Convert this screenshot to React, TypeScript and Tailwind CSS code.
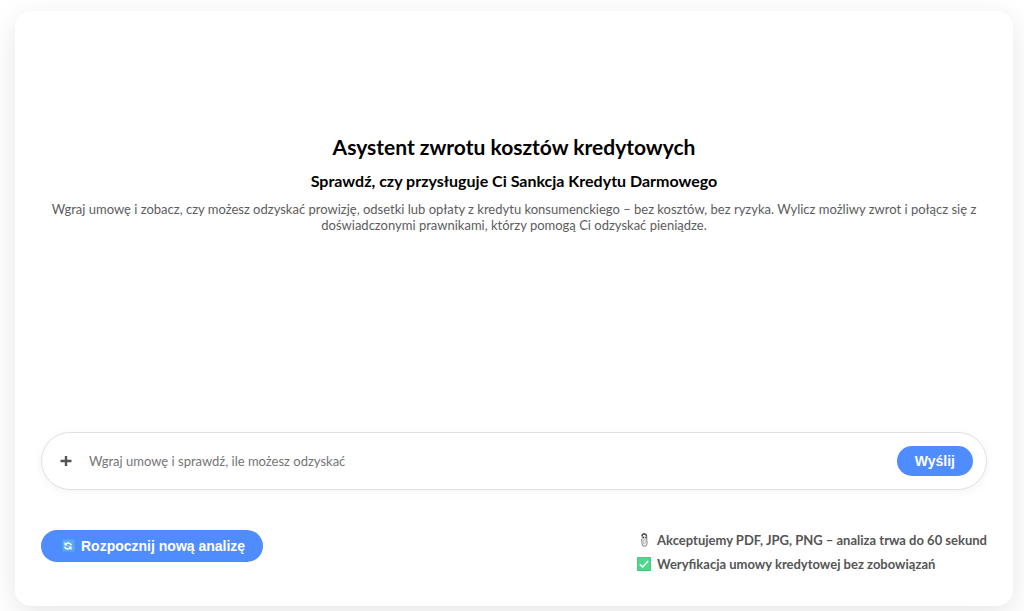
function RefreshIcon() {
  return (
    <svg viewBox="0 0 14 14" className="h-3.5 w-3.5 shrink-0" aria-hidden="true">
      <rect x="0.5" y="0.5" width="13" height="13" rx="0.6" fill="#5aaaf6" />
      <path d="M0.5 13.1h13M0.9 0.5v13" stroke="#3b8be6" strokeWidth="0.8" />
      <path d="M10.3 6.2C9.8 4.2 6.8 3.3 4.8 5M3.7 7.8C4.2 9.8 7.2 10.7 9.2 9" fill="none" stroke="#fff" strokeWidth="1.5" />
      <path d="M3.4 3v3.4h3.4zM10.6 11V7.6H7.2z" fill="#fff" />
    </svg>
  );
}

function PaperclipIcon() {
  return (
    <svg viewBox="0 0 14 14" className="h-3.5 w-3.5 shrink-0" aria-hidden="true">
      <path
        d="M5 3.6C5 1.6 5.7.8 7.1.8s2.4.9 2.5 2.6l.4 6.2c.1 2.3-.8 3.6-2.4 3.6S5.2 12.2 5 10.2L4.6 5.8"
        fill="none"
        stroke="#999"
        strokeWidth="1.2"
      />
      <path
        d="M7.9 3.6l.3 5.6c.1 1.3-.2 1.9-.8 1.9s-.9-.5-1-1.5L6 5.6c-.1-1.2.3-1.9 1-1.9"
        fill="none"
        stroke="#b5b5b5"
        strokeWidth="1"
      />
      <path d="M5 3.5C5 1.7 5.8.8 7.1.8s2.3.8 2.5 2.4" fill="none" stroke="#444" strokeWidth="1.2" />
      <path d="M5.5 4.5h1.5M8.3 4.5h1.2" stroke="#333" strokeWidth="1.5" />
    </svg>
  );
}

function CheckIcon() {
  return (
    <svg viewBox="0 0 14 14" className="h-3.5 w-3.5 shrink-0" aria-hidden="true">
      <rect width="14" height="14" rx="1" fill="#3cc47c" />
      <rect x="0.6" y="0.6" width="12.8" height="12.4" rx="0.8" fill="#52d68d" />
      <path d="M2.8 7.2l2.8 2.7 5.6-5.8" fill="none" stroke="#fff" strokeWidth="1.4" />
    </svg>
  );
}

export default function App() {
  return (
    <div className="flex min-h-screen flex-col bg-white pt-[11px] pr-[11px] pb-[5px] pl-[15px] font-['Lato','Noto_Sans',sans-serif]">
      <main className="flex flex-1 flex-col rounded-2xl bg-white px-[26px] pb-[30px] shadow-[0_8px_30px_rgba(0,0,0,0.1)]">
        <section className="flex flex-1 flex-col items-center justify-center pb-[77px] text-center">
          <h1 className="text-[21px] leading-7 font-bold text-black">Asystent zwrotu kosztów kredytowych</h1>
          <h2 className="mt-2 text-base leading-6 font-bold text-black">
            Sprawdź, czy przysługuje Ci Sankcja Kredytu Darmowego
          </h2>
          <p className="mt-2 px-1 text-[13px] leading-4 text-[#5c5c5c]">
            Wgraj umowę i zobacz, czy możesz odzyskać prowizję, odsetki lub opłaty z kredytu konsumenckiego – bez
            kosztów, bez ryzyka. Wylicz możliwy zwrot i połącz się z doświadczonymi prawnikami, którzy pomogą Ci
            odzyskać pieniądze.
          </p>
        </section>

        <form
          className="flex items-center rounded-[30px] border border-[#e0e0e0] py-[13px] pr-[13px] pl-[18px] shadow-[0_2px_10px_rgba(0,0,0,0.05)]"
          onSubmit={(e) => e.preventDefault()}
        >
          <button type="button" aria-label="Dodaj plik" className="flex h-3 w-3 items-center justify-center text-[#555]">
            <svg viewBox="0 0 12 12" className="h-3 w-3" aria-hidden="true">
              <path d="M6 1v10M0.5 6h11" stroke="currentColor" strokeWidth="2.4" />
            </svg>
          </button>
          <input
            type="text"
            aria-label="Wiadomość"
            placeholder="Wgraj umowę i sprawdź, ile możesz odzyskać"
            className="ml-[17px] min-w-0 flex-1 text-[13px] leading-5 text-[#333] outline-none placeholder:text-[#757575]"
          />
          <button
            type="submit"
            className="rounded-full bg-[#4f8cff] px-[18px] py-[5px] font-['Liberation_Sans',Arial,sans-serif] text-sm leading-5 font-bold text-white"
          >
            Wyślij
          </button>
        </form>

        <footer className="mt-[38px] flex items-start justify-between">
          <button
            type="button"
            className="mt-0.5 flex items-center gap-1.5 rounded-full bg-[#4f8cff] py-1.5 pr-[18px] pl-5 font-['Liberation_Sans',Arial,sans-serif] text-sm leading-5 font-bold text-white"
          >
            <RefreshIcon />
            Rozpocznij nową analizę
          </button>
          <ul className="text-[13px] leading-6 font-bold text-[#555]">
            <li className="flex items-center gap-1.5">
              <PaperclipIcon />
              Akceptujemy PDF, JPG, PNG – analiza trwa do 60 sekund
            </li>
            <li className="flex items-center gap-1.5">
              <CheckIcon />
              Weryfikacja umowy kredytowej bez zobowiązań
            </li>
          </ul>
        </footer>
      </main>
    </div>
  );
}
